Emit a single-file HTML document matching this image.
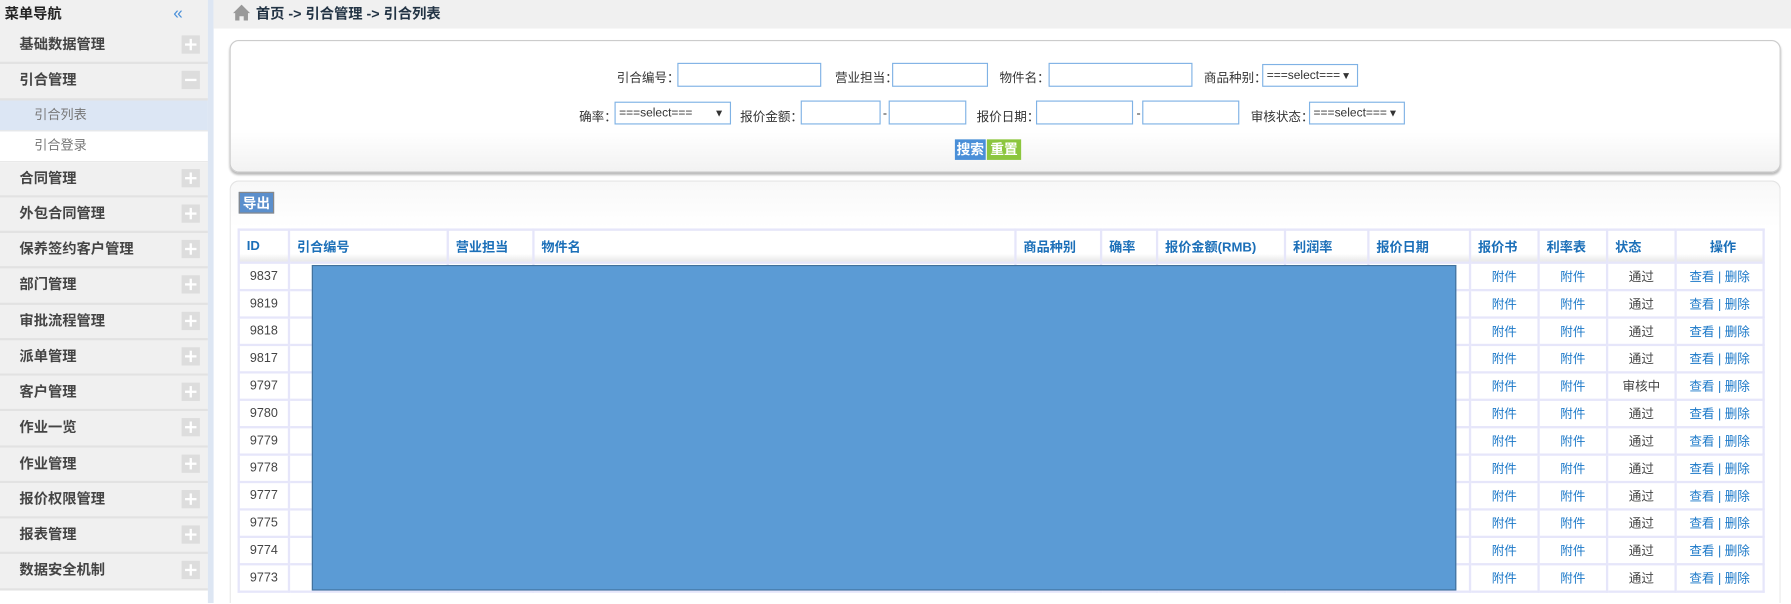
<!DOCTYPE html>
<html style="overflow:hidden;width:1791px;height:604px"><head><meta charset="utf-8"><style>
*{margin:0;padding:0;box-sizing:border-box}
body{width:1791px;height:604px;overflow:hidden;background:#fff;font-family:"Liberation Sans","Noto Sans CJK SC",sans-serif;font-size:12px;color:#333;position:relative}
#w{position:absolute;left:0;top:0;width:1568px;height:528px;overflow:hidden;transform:scale(1.14222);transform-origin:0 0}
.side{position:absolute;left:0;top:0;width:182px;height:528px;background:#fff}
.stripe{position:absolute;left:182px;top:0;width:5px;height:528px;background:#dde6f3}
.sh{height:25px;background:#f0f0f0;font-weight:bold;font-size:12.5px;line-height:24px;padding-left:4px;color:#222;position:relative}
.sh span{position:absolute;right:22px;top:0;color:#4a90d9;font-weight:normal;font-size:15px}
.it{height:31.25px;background:#f0f0f0;border-bottom:2px solid #e2e2e2;font-weight:bold;font-size:12.5px;line-height:29px;padding-left:17px;color:#444;position:relative}
.it i{position:absolute;left:159px;top:6px;width:16px;height:16px;background:#ddd}
.it i:before{content:"";position:absolute;left:3px;top:7px;width:10px;height:2px;background:#fff}
.it i.p:after{content:"";position:absolute;left:7px;top:3px;width:2px;height:10px;background:#fff}
.sub{height:27px;line-height:26px;padding-left:30px;color:#777;font-size:11.5px;border-bottom:1px solid #e8e8e8}
.top{position:absolute;left:187px;top:0;width:1381px;height:25px;background:#f0f0f0;font-weight:bold;font-size:12.5px;line-height:24px;padding-left:37px;color:#234}
.panel{position:absolute;left:201px;top:35px;width:1358px;height:116px;border:1px solid #ccc;border-radius:8px;background:linear-gradient(#fff 70%,#f2f2f2);box-shadow:0 2px 2px #bbb}
.f{position:absolute;font-size:11px;color:#333;top:0}
.in{position:absolute;height:21px;border:1px solid #7fb2e5;background:#fff}
.sel{position:absolute;height:20px;border:1px solid #7fb2e5;background:#fff;font-size:10.5px;line-height:18px;padding-left:3px}
.sel b{position:absolute;right:5px;font-size:9px}
.btn{position:absolute;top:122px;height:18px;color:#fff;font-weight:bold;font-size:12px;line-height:18px;text-align:center}
.panel2{position:absolute;left:201px;top:158px;width:1358px;height:370px;border:1px solid #e4e4e4;border-bottom:0;border-radius:8px 8px 0 0;background:linear-gradient(#f8f8f8,#fff 40px)}
table{position:absolute;left:208px;top:200px;border-collapse:collapse;width:1337px;table-layout:fixed}
td,th{border:2px solid #e6e6fa;height:24px;font-size:11px;text-align:center}
th{height:29px;color:#1b6fb8;text-align:left;padding-left:6px;font-size:11.5px;background:linear-gradient(#fff 75%,#e8e8e8)}
td{color:#444}
.a{color:#1b78c8}
.blue{position:absolute;left:273px;top:232px;width:1002px;height:285px;background:#5b9bd5;border:1px solid #41719c}
</style></head><body><div id="w">
<div class="side">
<div class="sh">菜单导航<span>«</span></div>
<div class="it">基础数据管理<i class="p"></i></div>
<div class="it">引合管理<i></i></div>
<div class="sub" style="background:#dce6f4">引合列表</div>
<div class="sub">引合登录</div>
<div class="it">合同管理<i class="p"></i></div>
<div class="it">外包合同管理<i class="p"></i></div>
<div class="it">保养签约客户管理<i class="p"></i></div>
<div class="it">部门管理<i class="p"></i></div>
<div class="it">审批流程管理<i class="p"></i></div>
<div class="it">派单管理<i class="p"></i></div>
<div class="it">客户管理<i class="p"></i></div>
<div class="it">作业一览<i class="p"></i></div>
<div class="it">作业管理<i class="p"></i></div>
<div class="it">报价权限管理<i class="p"></i></div>
<div class="it">报表管理<i class="p"></i></div>
<div class="it">数据安全机制<i class="p"></i></div>
</div>
<div class="stripe"></div>
<div class="top"><svg style="position:absolute;left:17px;top:4px" width="15" height="14" viewBox="0 0 16 15"><path d="M8 0L0 8h2v7h4v-4h4v4h4V8h2z" fill="#999"/></svg>首页 -&gt; 引合管理 -&gt; 引合列表</div>
<div class="panel"></div>
<span class="f" style="left:540px;top:60px">引合编号：</span><div class="in" style="left:593px;top:55px;width:126px"></div>
<span class="f" style="left:731px;top:60px">营业担当：</span><div class="in" style="left:781px;top:55px;width:84px"></div>
<span class="f" style="left:875px;top:60px">物件名：</span><div class="in" style="left:918px;top:55px;width:126px"></div>
<span class="f" style="left:1054px;top:60px">商品种别：</span><div class="sel" style="left:1105px;top:56px;width:84px">===select===<b>▼</b></div>
<span class="f" style="left:507px;top:94px">确率：</span><div class="sel" style="left:538px;top:89px;width:102px">===select===<b>▼</b></div>
<span class="f" style="left:648px;top:94px">报价金额：</span><div class="in" style="left:701px;top:88px;width:70px"></div><span class="f" style="left:773px;top:94px">-</span><div class="in" style="left:778px;top:88px;width:68px"></div>
<span class="f" style="left:855px;top:94px">报价日期：</span><div class="in" style="left:907px;top:88px;width:85px"></div><span class="f" style="left:995px;top:94px">-</span><div class="in" style="left:1000px;top:88px;width:85px"></div>
<span class="f" style="left:1095px;top:94px">审核状态：</span><div class="sel" style="left:1146px;top:89px;width:84px">===select===<b>▼</b></div>
<div class="btn" style="left:836px;width:27px;background:#4a8fd8">搜索</div>
<div class="btn" style="left:864px;width:30px;background:#8cc63e">重置</div>
<div class="panel2"></div>
<div class="btn" style="left:209px;top:168px;width:31px;height:19px;background:#5b8fcc;border:1px solid #888">导出</div>
<table>
<tr><th style="width:44px">ID</th><th style="width:139px">引合编号</th><th style="width:75px">营业担当</th><th style="width:422px">物件名</th><th style="width:75px">商品种别</th><th style="width:49px">确率</th><th style="width:112px">报价金额(RMB)</th><th style="width:73px">利润率</th><th style="width:89px">报价日期</th><th style="width:60px">报价书</th><th style="width:60px">利率表</th><th style="width:60px">状态</th><th style="text-align:center">操作</th></tr>
<tr><td>9837</td><td></td><td></td><td></td><td></td><td></td><td></td><td></td><td></td><td class="a">附件</td><td class="a">附件</td><td>通过</td><td class="a">查看 | 删除</td></tr>
<tr><td>9819</td><td></td><td></td><td></td><td></td><td></td><td></td><td></td><td></td><td class="a">附件</td><td class="a">附件</td><td>通过</td><td class="a">查看 | 删除</td></tr>
<tr><td>9818</td><td></td><td></td><td></td><td></td><td></td><td></td><td></td><td></td><td class="a">附件</td><td class="a">附件</td><td>通过</td><td class="a">查看 | 删除</td></tr>
<tr><td>9817</td><td></td><td></td><td></td><td></td><td></td><td></td><td></td><td></td><td class="a">附件</td><td class="a">附件</td><td>通过</td><td class="a">查看 | 删除</td></tr>
<tr><td>9797</td><td></td><td></td><td></td><td></td><td></td><td></td><td></td><td></td><td class="a">附件</td><td class="a">附件</td><td>审核中</td><td class="a">查看 | 删除</td></tr>
<tr><td>9780</td><td></td><td></td><td></td><td></td><td></td><td></td><td></td><td></td><td class="a">附件</td><td class="a">附件</td><td>通过</td><td class="a">查看 | 删除</td></tr>
<tr><td>9779</td><td></td><td></td><td></td><td></td><td></td><td></td><td></td><td></td><td class="a">附件</td><td class="a">附件</td><td>通过</td><td class="a">查看 | 删除</td></tr>
<tr><td>9778</td><td></td><td></td><td></td><td></td><td></td><td></td><td></td><td></td><td class="a">附件</td><td class="a">附件</td><td>通过</td><td class="a">查看 | 删除</td></tr>
<tr><td>9777</td><td></td><td></td><td></td><td></td><td></td><td></td><td></td><td></td><td class="a">附件</td><td class="a">附件</td><td>通过</td><td class="a">查看 | 删除</td></tr>
<tr><td>9775</td><td></td><td></td><td></td><td></td><td></td><td></td><td></td><td></td><td class="a">附件</td><td class="a">附件</td><td>通过</td><td class="a">查看 | 删除</td></tr>
<tr><td>9774</td><td></td><td></td><td></td><td></td><td></td><td></td><td></td><td></td><td class="a">附件</td><td class="a">附件</td><td>通过</td><td class="a">查看 | 删除</td></tr>
<tr><td>9773</td><td></td><td></td><td></td><td></td><td></td><td></td><td></td><td></td><td class="a">附件</td><td class="a">附件</td><td>通过</td><td class="a">查看 | 删除</td></tr>
</table>
<div class="blue"></div>
</div></body></html>
